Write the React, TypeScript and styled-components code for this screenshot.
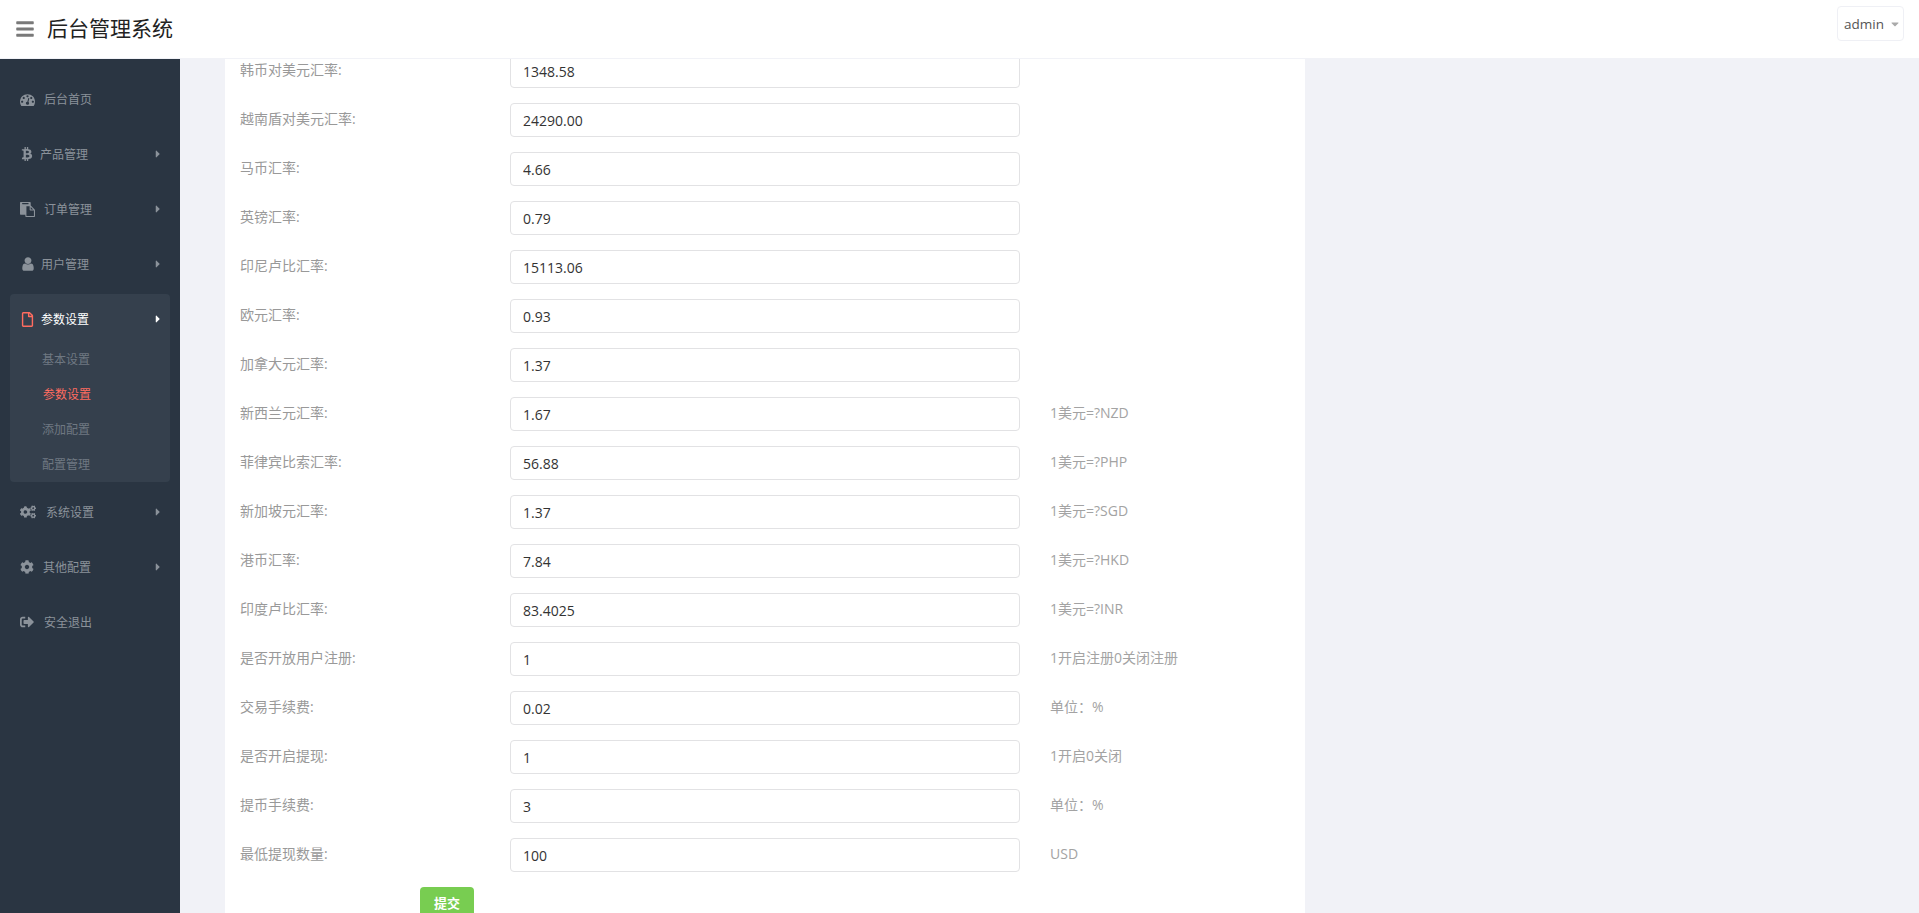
import React from "react";
import styled, { createGlobalStyle } from "styled-components";
import { FaBars, FaBtc, FaCaretDown, FaCaretRight, FaCog, FaCogs, FaRegFile, FaSignOutAlt } from "react-icons/fa";

const Global = createGlobalStyle`
  html, body { margin: 0; padding: 0; height: 100%; }
  body { font-family: "Open Sans", "Noto Sans CJK SC", sans-serif; font-size: 14px; color: #797979; background: #f1f2f7; }
  * { box-sizing: border-box; }
`;

const Shell = styled.div`
  display: flex;
  flex-direction: column;
  height: 913px;
  overflow: hidden;
`;
const Header = styled.header`
  flex: none;
  height: 59px;
  display: flex;
  align-items: center;
  padding: 0 15px;
  background: #fff;
  border-bottom: 1px solid #f1f2f7;
`;
const Burger = styled.span`
  display: flex;
  color: #797979;
  font-size: 20px;
  margin-right: 12px;
`;
const Title = styled.h1`
  margin: 0;
  padding-bottom: 4px;
  font-size: 21px;
  font-weight: 400;
  color: #222;
  flex: 1;
`;
const UserButton = styled.button`
  align-self: flex-start;
  width: 67px;
  height: 35px;
  margin-top: 6px;
  display: flex;
  align-items: center;
  gap: 5px;
  padding: 0 0 0 6px;
  background: #fff;
  border: 1px solid #eff0f5;
  border-radius: 4px;
  font: 13.5px "Open Sans", sans-serif;
  color: #555;
  svg { color: #aaa; font-size: 12px; }
`;
const Body = styled.div`
  flex: 1;
  display: flex;
  min-height: 0;
`;
const Sidebar = styled.nav`
  flex: none;
  width: 180px;
  padding-top: 15px;
  background: #2a3542;
`;
const Group = styled.div<{ $open?: boolean }>`
  margin: 0 10px 5px;
  border-radius: 4px;
  background: ${(p) => (p.$open ? "#35404d" : "transparent")};
`;
const Item = styled.div<{ $active?: boolean }>`
  height: 50px;
  display: flex;
  align-items: center;
  padding: 0 10px;
  font-size: 12px;
  color: ${(p) => (p.$active ? "#fff" : "#8b929a")};
`;
const IconSlot = styled.span<{ $w: number; $size: number; $active?: boolean }>`
  flex: none;
  width: ${(p) => p.$w}px;
  display: flex;
  font-size: ${(p) => p.$size}px;
  color: ${(p) => (p.$active ? "#ff6c60" : "#8b929a")};
`;
const Label = styled.span`
  flex: 1;
`;
const Caret = styled.span`
  display: flex;
  font-size: 12px;
  margin-right: -4px;
`;
const SubList = styled.div`
  margin-top: -2px;
  padding-left: 32px;
`;
const SubItem = styled.div<{ $active?: boolean }>`
  height: 35px;
  line-height: 35px;
  font-size: 12px;
  padding-left: ${(p) => (p.$active ? 1 : 0)}px;
  color: ${(p) => (p.$active ? "#ff6c60" : "#6f7882")};
`;
const Main = styled.main`
  flex: 1;
  min-width: 0;
  overflow: hidden;
  padding-left: 45px;
`;
const Card = styled.form`
  width: 1080px;
  margin-top: -5px;
  padding: 0 15px;
  background: #fff;
`;
const Row = styled.div`
  display: flex;
  align-items: center;
  height: 34px;
  margin-bottom: 15px;
`;
const FieldLabel = styled.label`
  flex: none;
  width: 270px;
  padding-bottom: 4px;
  color: #999;
`;
const Input = styled.input`
  flex: none;
  width: 510px;
  height: 34px;
  padding: 0 12px;
  border: 1px solid #e2e2e4;
  border-radius: 4px;
  font: 14px "Open Sans", sans-serif;
  color: #333;
  background: #fff;
`;
const Help = styled.span`
  margin-left: 30px;
  padding-bottom: 4px;
  font-size: 14px;
  color: #a3a3a3;
`;
const Submit = styled.button`
  display: block;
  width: 54px;
  height: 34px;
  margin-left: 180px;
  padding: 0 0 3px;
  border: none;
  border-radius: 4px;
  background: #78cd51;
  color: #fff;
  font: 600 13px "Open Sans", "Noto Sans CJK SC", sans-serif;
`;

const Fa4 = ({ d, box = "0 0 1792 1792" }: { d: string; box?: string }) => (
  <svg width="1em" height="1em" viewBox={box} fill="currentColor" aria-hidden="true"><path d={d} /></svg>
);

const tachometer = "M384 1152q0-53-37.5-90.5t-90.5-37.5-90.5 37.5-37.5 90.5 37.5 90.5 90.5 37.5 90.5-37.5 37.5-90.5zm192-448q0-53-37.5-90.5t-90.5-37.5-90.5 37.5-37.5 90.5 37.5 90.5 90.5 37.5 90.5-37.5 37.5-90.5zm428 481l101-382q6-26-7.5-48.5t-38.5-29.5-48 6.5-30 39.5l-101 382q-60 5-107 43.5t-63 98.5q-20 77 20 146t117 89 146-20 89-117q16-60-6-117t-72-91zm660-33q0-53-37.5-90.5t-90.5-37.5-90.5 37.5-37.5 90.5 37.5 90.5 90.5 37.5 90.5-37.5 37.5-90.5zm-640-640q0-53-37.5-90.5t-90.5-37.5-90.5 37.5-37.5 90.5 37.5 90.5 90.5 37.5 90.5-37.5 37.5-90.5zm448 192q0-53-37.5-90.5t-90.5-37.5-90.5 37.5-37.5 90.5 37.5 90.5 90.5 37.5 90.5-37.5 37.5-90.5zm320 448q0 261-141 483-19 29-54 29h-1402q-35 0-54-29-141-221-141-483 0-182 71-348t191-286 286-191 348-71 348 71 286 191 191 286 71 348z";
const paste = "M768 1664h896v-640h-416q-40 0-68-28t-28-68v-416h-384v1152zm256-1440v-64q0-13-9.5-22.5t-22.5-9.5h-704q-13 0-22.5 9.5t-9.5 22.5v64q0 13 9.5 22.5t22.5 9.5h704q13 0 22.5-9.5t9.5-22.5zm256 672h299l-299-299v299zm512 128v672q0 40-28 68t-68 28h-960q-40 0-68-28t-28-68v-160h-544q-40 0-68-28t-28-68v-1344q0-40 28-68t68-28h1088q40 0 68 28t28 68v328q21 13 36 28l408 408q28 28 48 76t20 88z";
const user = "M1280 1399q0 109-62.5 187t-150.5 78h-854q-88 0-150.5-78t-62.5-187q0-85 8.5-160.5t31.5-152 58.5-131 94-89 134.5-34.5q131 128 313 128t313-128q76 0 134.5 34.5t94 89 58.5 131 31.5 152 8.5 160.5zm-256-887q0 159-112.5 271.5t-271.5 112.5-271.5-112.5-112.5-271.5 112.5-271.5 271.5-112.5 271.5 112.5 112.5 271.5z";

const rows: [string, string, string?][] = [
  ["韩币对美元汇率:", "1348.58"],
  ["越南盾对美元汇率:", "24290.00"],
  ["马币汇率:", "4.66"],
  ["英镑汇率:", "0.79"],
  ["印尼卢比汇率:", "15113.06"],
  ["欧元汇率:", "0.93"],
  ["加拿大元汇率:", "1.37"],
  ["新西兰元汇率:", "1.67", "1美元=?NZD"],
  ["菲律宾比索汇率:", "56.88", "1美元=?PHP"],
  ["新加坡元汇率:", "1.37", "1美元=?SGD"],
  ["港币汇率:", "7.84", "1美元=?HKD"],
  ["印度卢比汇率:", "83.4025", "1美元=?INR"],
  ["是否开放用户注册:", "1", "1开启注册0关闭注册"],
  ["交易手续费:", "0.02", "单位：%"],
  ["是否开启提现:", "1", "1开启0关闭"],
  ["提币手续费:", "3", "单位：%"],
  ["最低提现数量:", "100", "USD"],
];

type NavProps = { icon: React.ReactNode; w: number; size?: number; text: string; caret?: boolean; active?: boolean };

const NavRow = ({ icon, w, size = 15, text, caret = true, active }: NavProps) => (
  <Item $active={active}>
    <IconSlot $w={w} $size={size} $active={active}>{icon}</IconSlot>
    <Label>{text}</Label>
    {caret && <Caret><FaCaretRight /></Caret>}
  </Item>
);

export default function App() {
  return (
    <Shell>
      <Global />
      <Header>
        <Burger><FaBars /></Burger>
        <Title>后台管理系统</Title>
        <UserButton type="button">admin <FaCaretDown /></UserButton>
      </Header>
      <Body>
        <Sidebar>
          <Group><NavRow icon={<Fa4 d={tachometer} />} w={24} text="后台首页" caret={false} /></Group>
          <Group><NavRow icon={<FaBtc />} w={20} size={14} text="产品管理" /></Group>
          <Group><NavRow icon={<Fa4 d={paste} />} w={24} text="订单管理" /></Group>
          <Group><NavRow icon={<Fa4 d={user} box="0 0 1280 1792" />} w={21} size={16} text="用户管理" /></Group>
          <Group $open>
            <NavRow icon={<FaRegFile />} w={21} size={15} text="参数设置" active />
            <SubList>
              <SubItem>基本设置</SubItem>
              <SubItem $active>参数设置</SubItem>
              <SubItem>添加配置</SubItem>
              <SubItem>配置管理</SubItem>
            </SubList>
          </Group>
          <Group><NavRow icon={<FaCogs />} w={26} size={16} text="系统设置" /></Group>
          <Group><NavRow icon={<FaCog />} w={23} size={14} text="其他配置" /></Group>
          <Group><NavRow icon={<FaSignOutAlt />} w={24} size={14} text="安全退出" caret={false} /></Group>
        </Sidebar>
        <Main>
          <Card>
            {rows.map(([label, value, help]) => (
              <Row key={label}>
                <FieldLabel>{label}</FieldLabel>
                <Input defaultValue={value} />
                {help && <Help>{help}</Help>}
              </Row>
            ))}
            <Submit type="button">提交</Submit>
          </Card>
        </Main>
      </Body>
    </Shell>
  );
}
